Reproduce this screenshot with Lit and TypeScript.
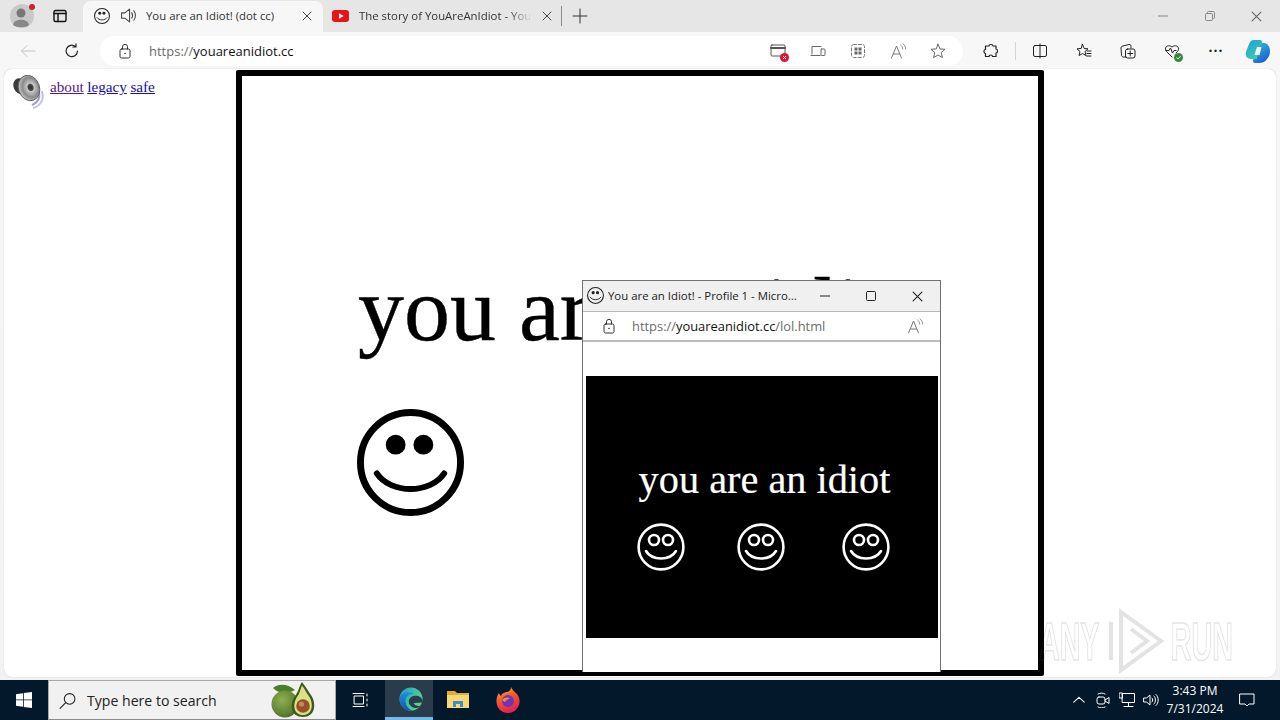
import { LitElement, html, svg, css } from "lit";
import { customElement } from "lit/decorators.js";

/* =========================
   ICONS
========================= */
const stroke = (body: unknown, size = 16, view = 16, color = "#333", width = 1) => html`
  <svg width="${size}" height="${size}" viewBox="0 0 ${view} ${view}" fill="none"
    stroke="${color}" stroke-width="${width}" stroke-linecap="round" stroke-linejoin="round">${body}</svg>
`;

const solidSmiley = (size: number, color = "#000") => html`
  <svg width="${size}" height="${size}" viewBox="0 0 108 108" fill="none" stroke="${color}">
    <circle cx="54" cy="54" r="50.5" stroke-width="7"/>
    <circle cx="39" cy="36" r="10" fill="${color}" stroke="none"/>
    <circle cx="67" cy="36" r="10" fill="${color}" stroke="none"/>
    <path d="M20 65 C34 86 74 86 88 65" stroke-width="6" stroke-linecap="round"/>
  </svg>
`;

const ringSmiley = html`
  <svg width="48" height="48" viewBox="0 0 48 48" fill="none" stroke="#fff" stroke-width="2.6">
    <circle cx="24" cy="24" r="22.4"/>
    <circle cx="17" cy="17" r="5"/>
    <circle cx="31" cy="17" r="5"/>
    <path d="M9 28 C15 38 33 38 39 28" stroke-linecap="round"/>
  </svg>
`;

const lock = stroke(svg`
  <rect x="3" y="6" width="10" height="9" rx="1.5"/>
  <path d="M5.5 6 V3.8 a2.5 2.5 0 0 1 5 0 V6"/>
  <circle cx="8" cy="10.5" r=".8" fill="#333" stroke="none"/>
`);

const readAloud = stroke(svg`
  <path d="M1.5 15 L6.5 3 L11.5 15 M3.3 11 H9.7"/>
  <path d="M10.5 2 C12 3 12.6 4.4 12.7 6 M13 .8 C15 2.2 15.6 4 15.6 6" stroke-width=".8"/>
`, 16, 16, "#777");

const speakerOutline = stroke(svg`
  <path d="M1.5 5.5 H4.5 L9 2 V14 L4.5 10.5 H1.5 Z"/>
  <path d="M11 5.5 C12 7 12 9 11 10.5 M13 3.5 C15 6 15 10 13 12.5"/>
`, 17, 16, "#444");

const closeX = (size = 10, color = "#444") => stroke(svg`<path d="M1 1 L9 9 M9 1 L1 9"/>`, size, 10, color, 1);

const avocado = html`
  <svg width="48" height="38" viewBox="0 0 48 38">
    <defs>
      <radialGradient id="lime" cx=".4" cy=".35" r=".75">
        <stop offset="0" stop-color="#8fae52"/>
        <stop offset=".7" stop-color="#5f8232"/>
        <stop offset="1" stop-color="#3f6020"/>
      </radialGradient>
    </defs>
    <path d="M3 7 C9 2 18 3 25 9 C18 13 9 13 3 7 Z" fill="#4d7c2a"/>
    <circle cx="15" cy="23" r="13.5" fill="url(#lime)"/>
    <path d="M32 1 C35 5 37 8 41 14 C47 23 45 36 33 36 C21 36 19 24 25 15 C29 10 29 5 32 1 Z" fill="#3f5a1c"/>
    <path d="M32 4.5 C35 8.5 36 11 39.5 16 C44 24 42 34 33 34 C24 34 22 24 27 16 C30 12 30 9 32 4.5 Z" fill="#dce086"/>
    <circle cx="33" cy="25" r="6.8" fill="#96512a"/>
    <circle cx="31.5" cy="23" r="2.6" fill="#c48a58"/>
  </svg>
`;

/* =========================
   APP
========================= */
@customElement("app-root")
class AppRoot extends LitElement {
  static styles = css`
    :host {
      display: block;
      width: 1280px;
      height: 720px;
      overflow: hidden;
      position: relative;
      font-family: "Open Sans", "Noto Sans", sans-serif;
      background: #f7f7f7;
    }
    .shell {
      height: 720px;
      display: flex;
      flex-direction: column;
    }
    svg {
      display: block;
      flex: none;
    }
    .slot {
      display: flex;
      align-items: center;
      justify-content: center;
      flex: none;
    }

    /* tab strip */
    .tabstrip {
      height: 32px;
      flex: none;
      display: flex;
      align-items: flex-end;
      background: #e6e6e6;
    }
    .tabstrip > .slot {
      height: 32px;
    }
    .s44 { width: 44px; }
    .s32 { width: 32px; }
    .s40 { width: 40px; }
    .avatar { width: 24px; height: 24px; position: relative; }
    .dot {
      position: absolute;
      right: -1px;
      top: 0;
      width: 6px;
      height: 6px;
      border-radius: 50%;
      background: #d0202c;
    }
    .tab {
      height: 31px;
      display: flex;
      align-items: center;
      font-size: 11.4px;
      color: #333;
      white-space: nowrap;
      box-sizing: border-box;
      padding-bottom: 2px;
    }
    .tab.active {
      width: 240px;
      margin-left: 7px;
      padding-left: 11px;
      padding-right: 11px;
      background: #f7f7f7;
      border-radius: 8px 8px 0 0;
    }
    .tab.active .speaker { margin-left: 10px; }
    .tab.active .title { margin-left: 9px; width: 146px; overflow: hidden; }
    .tab.second {
      width: 238px;
      padding-left: 9px;
      padding-right: 9px;
    }
    .tab.second .title {
      margin-left: 10px;
      width: 173px;
      overflow: hidden;
      -webkit-mask-image: linear-gradient(90deg, #000 86%, transparent);
      mask-image: linear-gradient(90deg, #000 86%, transparent);
    }
    .tab-close { margin-left: auto; }
    .tab-divider {
      width: 1px;
      height: 20px;
      background: #8a8a8a;
      align-self: center;
    }
    .plus { width: 36px; }
    .window-controls {
      margin-left: auto;
      display: flex;
      width: 140px;
    }
    .window-controls .slot { width: 46.5px; height: 32px; }

    /* toolbar */
    .toolbar {
      flex: none;
      display: flex;
      align-items: center;
      background: #f7f7f7;
      padding-top: 1px;
      box-sizing: border-box;
      height: 37px;
    }
    .nav { width: 44px; height: 30px; }
    .nav.back { width: 56px; }
    .nav.reload { width: 32px; margin-right: 12px; }
    .address {
      width: 863px;
      height: 30px;
      background: #fff;
      border-radius: 15px;
      display: flex;
      align-items: center;
      padding: 0 5px 0 17px;
      box-sizing: border-box;
      flex: none;
    }
    .url {
      margin-left: 16px;
      font-size: 13px;
      color: #6b6b6b;
      white-space: nowrap;
    }
    .url b { font-weight: 400; color: #111; }
    .address-icons {
      margin-left: auto;
      display: flex;
    }
    .badge-wrap { position: relative; width: 16px; height: 16px; }
    .badge {
      position: absolute;
      right: -3px;
      bottom: -3px;
    }
    .toolbar-icons {
      margin-left: 6px;
      display: flex;
      align-items: center;
    }
    .tool-divider {
      width: 1px;
      height: 18px;
      background: #d4d4d4;
      margin: 0 2px;
    }
    .more {
      font-size: 14px;
      letter-spacing: 1px;
      font-weight: 700;
      color: #222;
      line-height: 1;
    }

    /* page */
    .page-wrap {
      flex: 1;
      min-height: 0;
      padding: 0 4px 3px;
      background: linear-gradient(#f7f7f7, #f2f2f2);
    }
    .page {
      height: 100%;
      background: #fff;
      border-radius: 8px;
      display: grid;
      grid-template-columns: 232px 808px 1fr;
      box-shadow: 0 0 1px rgba(0, 0, 0, 0.3);
    }
    .links {
      display: flex;
      align-items: flex-start;
      padding: 6px 0 0 8px;
      font: 15.2px "Liberation Serif", serif;
    }
    .links a { color: #1a0dab; margin-right: 3.5px; line-height: 24px; }
    .links a.visited { color: #551a8b; }
    .links svg { margin-right: 4px; }
    .frame {
      margin-top: 1px;
      height: 606px;
      box-sizing: border-box;
      border: 6px solid #000;
      border-radius: 2px;
      overflow: hidden;
      display: flex;
      flex-direction: column;
      align-items: flex-start;
      padding-left: 115px;
      background: #fff;
    }
    .big-text {
      margin: 182px 0 0 1px;
      font: 92px/102px "Liberation Serif", serif;
      -webkit-text-stroke: 0.4px #000;
      color: #000;
      white-space: nowrap;
    }
    .big-faces {
      margin-top: 49px;
      display: flex;
    }

    /* taskbar */
    .taskbar {
      height: 40px;
      flex: none;
      display: flex;
      background: #03182b;
      color: #fff;
    }
    .taskbar .slot { height: 40px; }
    .start { width: 48px; }
    .search {
      width: 288px;
      height: 40px;
      box-sizing: border-box;
      background: #f1f1f1;
      border: 1px solid #a8a8a8;
      border-bottom-color: #8a8a8a;
      display: flex;
      align-items: center;
      padding-left: 10px;
      color: #222;
      font-size: 14.1px;
    }
    .search span { margin-left: 11px; }
    .search .fruit { margin-left: auto; margin-right: 17px; }
    .taskview { width: 49px; margin-left: -1px; margin-right: 1px; }
    .edge {
      width: 48px;
      box-sizing: border-box;
      background: #2a3c4c;
      border-bottom: 3px solid #76b9ed;
      padding-left: 3px;
    }
    .pin { width: 50px; }
    .tray {
      margin-left: auto;
      display: flex;
      align-items: center;
      padding-right: 11px;
    }
    .tray .slot { width: 24px; }
    .clock {
      width: 60px;
      text-align: center;
      font-size: 12px;
      line-height: 18px;
      margin-left: 2px;
      white-space: nowrap;
    }
    .tray .notify { width: 44px; }

    /* popup window, sits over the page */
    .popup {
      position: absolute;
      left: 582px;
      top: 280px;
      width: 359px;
      height: 392px;
      box-sizing: border-box;
      border: 1px solid #707070;
      border-bottom: none;
      background: #fff;
      display: flex;
      flex-direction: column;
    }
    .popup-title {
      height: 30px;
      flex: none;
      background: #f0f0f0;
      display: flex;
      align-items: center;
      padding-left: 4px;
      font-size: 11.4px;
      color: #222;
      white-space: nowrap;
      border-bottom: 1px solid #b8b8b8;
    }
    .popup-title .face svg { margin-bottom: 2px; }
    .popup-title span { margin: 0 0 2px 4px; width: 199px; overflow: hidden; }
    .popup-title .slot { width: 46px; height: 30px; }
    .popup-url {
      height: 30px;
      flex: none;
      box-sizing: border-box;
      display: flex;
      align-items: center;
      padding: 0 17px 0 18px;
      border-bottom: 2px solid #bdbdbd;
    }
    .popup-url .url { margin-left: 15px; font-size: 12.9px; }
    .popup-url .read { margin-left: auto; }
    .black {
      margin: 34px 2px 0 3px;
      height: 262px;
      background: #000;
      color: #fff;
      display: flex;
      flex-direction: column;
      align-items: center;
    }
    .black-text {
      margin-top: 81px;
      font: 40.3px/46px "Liberation Serif", serif;
      -webkit-text-stroke: 0.2px #fff;
      white-space: nowrap;
      padding-left: 5px;
    }
    .black-faces {
      margin-top: 20px;
      display: flex;
      gap: 52px;
      padding-left: 2px;
    }
    .black-faces svg:last-child { margin-left: 5px; }

    /* watermark */
    .mark {
      position: absolute;
      left: 1039px;
      top: 608px;
      width: 194px;
      height: 66px;
      display: flex;
      align-items: center;
      justify-content: space-between;
      font: 700 53px/1 "Liberation Sans", sans-serif;
      color: transparent;
      -webkit-text-stroke: 1.5px rgba(90, 90, 90, 0.17);
    }
    .mark span {
      display: block;
      flex: none;
      transform: scaleX(0.54);
    }
    .mark .any { transform-origin: left; margin-right: -52px; }
    .mark .run { transform-origin: right; margin-left: -53px; }
  `;

  render() {
    return html`
      <div class="shell">
        ${this.renderTabstrip()}
        ${this.renderToolbar()}
        <div class="page-wrap">
          <div class="page">
            <div class="links">
              <svg width="34" height="34" viewBox="0 0 34 34">
                <defs>
                  <radialGradient id="cone" cx=".58" cy=".5" r=".55">
                    <stop offset="0" stop-color="#2e2e2e"/>
                    <stop offset=".22" stop-color="#4a4a4a"/>
                    <stop offset=".3" stop-color="#c8c8c8"/>
                    <stop offset=".7" stop-color="#8a8a8a"/>
                    <stop offset="1" stop-color="#c2c2c2"/>
                  </radialGradient>
                </defs>
                <path d="M26 15 C29 21 27 27 20 30" stroke="#9f9cc9" stroke-width="2" fill="none"/>
                <path d="M29.5 16 C33 23 29 31 21 33" stroke="#c3c1e2" stroke-width="2" fill="none"/>
                <ellipse cx="8" cy="11" rx="6.5" ry="8" transform="rotate(-20 8 11)" fill="#3a3a3a"/>
                <ellipse cx="17" cy="13" rx="10.5" ry="13" transform="rotate(-20 17 13)" fill="url(#cone)" stroke="#555" stroke-width=".8"/>
              </svg>
              <a class="visited" href="#">about</a>
              <a href="#">legacy</a>
              <a href="#">safe</a>
            </div>
            <div class="frame">
              <div class="big-text">you are an idiot</div>
              <div class="big-faces">${solidSmiley(107)}</div>
            </div>
          </div>
        </div>
        ${this.renderTaskbar()}
      </div>
      ${this.renderPopup()}
      <div class="mark">
        <span class="any">ANY</span>
        <svg width="60" height="66" viewBox="0 0 60 66" fill="none" stroke="rgba(90,90,90,.17)" stroke-width="4">
          <path d="M6 14 V52 M16 4 L56 33 L16 62 Z M26 21 L42 33 L26 45"/>
        </svg>
        <span class="run">RUN</span>
      </div>
    `;
  }

  private renderTabstrip() {
    return html`
      <div class="tabstrip">
        <div class="slot s44">
          <div class="avatar">
            <svg width="24" height="24" viewBox="0 0 24 24">
              <circle cx="12" cy="12" r="12" fill="#c9c9c9"/>
              <circle cx="11" cy="9" r="4.5" fill="#777"/>
              <path d="M3 21 C4 14 18 14 19 21 C16 24 7 24 3 21 Z" fill="#888"/>
            </svg>
            <span class="dot"></span>
          </div>
        </div>
        <div class="slot s32">
          ${stroke(svg`<rect x="2" y="2.5" width="12" height="11" rx="1.5" stroke-width="1.4"/><path d="M2 5.5 H14 M6 5.5 V13.5" stroke-width="1.4"/>`, 16, 16, "#111")}
        </div>
        <div class="tab active">
          ${solidSmiley(16, "#222")}
          <span class="speaker">${speakerOutline}</span>
          <span class="title">You are an Idiot! (dot cc)</span>
          <span class="tab-close">${closeX()}</span>
        </div>
        <div class="tab second">
          <svg width="17" height="12" viewBox="0 0 17 12">
            <rect width="17" height="12" rx="3" fill="#e8141c"/>
            <path d="M7 3.2 L11.5 6 L7 8.8 Z" fill="#fff"/>
          </svg>
          <span class="title">The story of YouAreAnIdiot - YouTube</span>
          <span class="tab-close">${closeX()}</span>
        </div>
        <div class="tab-divider"></div>
        <div class="slot plus">
          ${stroke(svg`<path d="M8 1 V15 M1 8 H15"/>`, 16, 16, "#333")}
        </div>
        <div class="window-controls">
          <div class="slot">${stroke(svg`<path d="M0 5 H10"/>`, 10, 10, "#888")}</div>
          <div class="slot">${stroke(svg`<rect x=".5" y="2.5" width="7" height="7" rx="1"/><path d="M2.5 2.5 V1.5 a1 1 0 0 1 1 -1 H8.5 a1 1 0 0 1 1 1 V6.5 a1 1 0 0 1 -1 1 H7.5"/>`, 10, 10, "#888")}</div>
          <div class="slot">${closeX(11, "#666")}</div>
        </div>
      </div>
    `;
  }

  private renderToolbar() {
    return html`
      <div class="toolbar">
        <div class="slot nav back">
          ${stroke(svg`<path d="M15 8 H1.5 M7 2.5 L1.5 8 L7 13.5"/>`, 16, 16, "#c4c4c4")}
        </div>
        <div class="slot nav reload">
          ${stroke(svg`<path d="M13.5 8 a5.7 5.7 0 1 1 -2 -4.4 M12 .8 V4 H8.8" />`, 16, 16, "#222", 1.2)}
        </div>
        <div class="address">
          ${lock}
          <span class="url">https://<b>youareanidiot.cc</b></span>
          <div class="address-icons">
            <div class="slot s40">
              <div class="badge-wrap">
                ${stroke(svg`<rect x="1" y="2" width="14" height="11" rx="1"/><path d="M1 5 H15" stroke-width="2"/>`, 16, 16, "#555")}
                <svg class="badge" width="9" height="9" viewBox="0 0 9 9">
                  <circle cx="4.5" cy="4.5" r="4.5" fill="#e3152b"/>
                  <path d="M3 3 L6 6 M6 3 L3 6" stroke="#fff" stroke-width="1"/>
                </svg>
              </div>
            </div>
            <div class="slot s40">
              ${stroke(svg`<path d="M2 11 V3.5 H11 M1 12.5 H10"/><rect x="11" y="6" width="4" height="6.5" rx=".7"/>`, 16, 16, "#666")}
            </div>
            <div class="slot s40">
              ${stroke(svg`
                <rect x="1.5" y="1.5" width="13" height="13" rx="2" stroke-dasharray="3 2"/>
                <rect x="4.5" y="4.5" width="3" height="3" fill="#666" stroke="none"/>
                <rect x="8.5" y="4.5" width="3" height="3" fill="#666" stroke="none"/>
                <rect x="4.5" y="8.5" width="3" height="3" fill="#666" stroke="none"/>
                <rect x="8.5" y="8.5" width="3" height="3" fill="#666" stroke="none"/>
              `, 16, 16, "#777")}
            </div>
            <div class="slot s40">${readAloud}</div>
            <div class="slot s40">
              ${stroke(svg`<path d="M8 1.2 L10 5.9 L15 6.3 L11.2 9.6 L12.4 14.6 L8 12 L3.6 14.6 L4.8 9.6 L1 6.3 L6 5.9 Z"/>`, 16, 16, "#666")}
            </div>
          </div>
        </div>
        <div class="toolbar-icons">
          <div class="slot s44">
            ${stroke(svg`<path d="M6 3 C6 1 10 1 10 3 H13 V6 C15 6 15 10 13 10 V13.5 H9.5 C9.5 11.5 6 11.5 6 13.5 H2.5 V10.5 C.5 10.5 .5 6.5 2.5 6.5 V3 Z" stroke-width="1.2"/>`, 16, 16, "#222")}
          </div>
          <div class="tool-divider"></div>
          <div class="slot s44">
            ${stroke(svg`<rect x="1.5" y="2.5" width="13" height="11" rx="1.5"/><path d="M8 1 V15"/>`, 16, 16, "#222")}
          </div>
          <div class="slot s44">
            ${stroke(svg`<path d="M6.5 1.5 L8.2 5.5 L12 5.8 L9 8.5 L10 12.5 L6.5 10.5 L3 12.5 L4 8.5 L1 5.8 L4.8 5.5 Z M11 8 H15 M11 10.5 H15 M10.5 13 H15"/>`, 16, 16, "#222")}
          </div>
          <div class="slot s44">
            ${stroke(svg`<path d="M6 14 H3.5 C2 14 1.5 13 1.5 12 L1 5 C1 3.5 2 3 3 3 L9 1.5 C10.5 1.3 11 2 11 3.5 V5"/><rect x="5.5" y="6" width="9.5" height="9" rx="2"/><path d="M10.2 8 V13 M7.8 10.5 H12.7"/>`, 16, 16, "#222")}
          </div>
          <div class="slot s44">
            <div class="badge-wrap">
              ${stroke(svg`<path d="M8 14 L2.5 8.5 C-.5 5 3.5 .5 8 4 C12.5 .5 16.5 5 13.5 8.5 L12 10 M2 7.5 H5 L6.5 5 L8.5 10 L10 7.5 H12"/>`, 16, 16, "#222")}
              <svg class="badge" width="9" height="9" viewBox="0 0 9 9">
                <circle cx="4.5" cy="4.5" r="4.5" fill="#2e8b3d"/>
                <path d="M2.5 4.6 L4 6 L6.6 3.2" stroke="#fff" stroke-width="1" fill="none"/>
              </svg>
            </div>
          </div>
          <div class="slot s44"><span class="more">···</span></div>
          <div class="slot s40">
            <svg width="26" height="26" viewBox="0 0 26 26">
              <defs>
                <linearGradient id="cpa" x1="0" y1="0" x2=".6" y2="1">
                  <stop offset="0" stop-color="#1f9ce8"/>
                  <stop offset="1" stop-color="#36cfa8"/>
                </linearGradient>
                <linearGradient id="cpb" x1="0" y1="0" x2=".6" y2="1">
                  <stop offset="0" stop-color="#36c5d8"/>
                  <stop offset="1" stop-color="#1b5fd0"/>
                </linearGradient>
              </defs>
              <path d="M9 2 H15 C17 2 17.5 4 16.5 6 L11.5 21 H6 C2 21 0 18 1 14 L4 6 C5 3.5 6.5 2 9 2 Z" fill="url(#cpa)"/>
              <path d="M16 5 H20 C23 6 25 9 25 13 C25 16 24 19 22 21 C20 24 17 25 14 25 H10 C8 25 7.5 23 8.5 21 H11.5 Z" fill="url(#cpb)"/>
              <path d="M12 9 H16.5 L14.5 17 H9.5 Z" fill="#f7f7f7"/>
            </svg>
          </div>
        </div>
      </div>
    `;
  }

  private renderTaskbar() {
    return html`
      <div class="taskbar">
        <div class="slot start">
          <svg width="16" height="16" viewBox="0 0 16 16" fill="#fff">
            <path d="M0 2.2 L7 1.2 V7.5 H0 Z M7.8 1.1 L16 0 V7.5 H7.8 Z M0 8.3 H7 V14.8 L0 13.8 Z M7.8 8.3 H16 V16 L7.8 14.9 Z"/>
          </svg>
        </div>
        <div class="search">
          ${stroke(svg`<circle cx="10" cy="6.5" r="5"/><path d="M6.3 10 L1 15.5"/>`, 17, 16, "#222")}
          <span>Type here to search</span>
          <div class="fruit">${avocado}</div>
        </div>
        <div class="slot taskview">
          ${stroke(svg`<rect x="2.5" y="4" width="9" height="8"/><path d="M1 1.5 H12 M1 14.5 H12 M15 2 V4 M15 7 V9 M15 12 V14"/>`, 16, 16, "#fff")}
        </div>
        <div class="slot edge">
          <svg width="24" height="24" viewBox="0 0 24 24">
            <defs>
              <linearGradient id="eg" x1="0" y1="0" x2="1" y2=".6">
                <stop offset="0" stop-color="#1f9fc8"/>
                <stop offset="1" stop-color="#58d68c"/>
              </linearGradient>
              <linearGradient id="eb" x1="0" y1="0" x2="0" y2="1">
                <stop offset="0" stop-color="#1f8fe0"/>
                <stop offset="1" stop-color="#0c59a8"/>
              </linearGradient>
            </defs>
            <circle cx="12" cy="12" r="11.5" fill="url(#eg)"/>
            <path d="M23.5 14 C23 9.5 18.5 8 14.5 9 C10 10 8.5 15 11 18 C13.5 22 19 22 22 18.5 C20 19.5 15.5 19 14.5 16 L23.5 15.5 Z" fill="#2a3c4c"/>
            <path d="M.5 12 C1 6 9 3 15 7 C9.5 6.5 6 10 6.5 15 C7 19 9.5 22 13 23.5 C6 24 .5 19 .5 12 Z" fill="url(#eb)"/>
          </svg>
        </div>
        <div class="slot pin">
          <svg width="22" height="20" viewBox="0 0 22 20">
            <path d="M0 1 H8 L10 3 H22 V18 H0 Z" fill="#e4ad2c"/>
            <rect y="5" width="22" height="13" fill="#f8d775"/>
            <path d="M6 17 V11 H16 V17 H13 V14 H9 V17 Z" fill="#3c8ed0"/>
          </svg>
        </div>
        <div class="slot pin">
          <svg width="24" height="26" viewBox="0 0 24 26">
            <defs>
              <linearGradient id="ff" x1="0" y1="0" x2=".4" y2="1">
                <stop offset="0" stop-color="#ffc42e"/>
                <stop offset=".5" stop-color="#f5582d"/>
                <stop offset="1" stop-color="#e3254f"/>
              </linearGradient>
            </defs>
            <path d="M15 0 C16 3 19 5 21 7 C24 11 24 15 23 18 C21 23 17 26 12 26 C6 26 1 22 .5 15 C.3 11 1.5 8 3 6 C3.5 7.5 4 8.5 5 9 C6 6 9 5 11 5 C13 4.5 15 3 15 0 Z" fill="url(#ff)"/>
            <circle cx="12" cy="14" r="6" fill="#6f35b5"/>
            <path d="M6 13 C8 10 12 10 14 11 C12 12.5 10 13 9 15 C8 14.5 7 14 6 13 Z" fill="#f5882d"/>
          </svg>
        </div>
        <div class="tray">
          <div class="slot">
            ${stroke(svg`<path d="M2 10.5 L8 5 L14 10.5"/>`, 14, 16, "#fff", 1.2)}
          </div>
          <div class="slot">
            ${stroke(svg`<rect x="2" y="5" width="8" height="7" rx="2"/><path d="M10 8 L14 5.5 V11.5 L10 9 M3 2 C5 .8 8 .8 10 2 M3 15 C5 16.2 8 16.2 10 15"/>`, 16, 16, "#fff")}
          </div>
          <div class="slot">
            ${stroke(svg`<rect x="3.5" y="1.5" width="12" height="9"/><rect x=".5" y="1" width="3" height="5"/><path d="M9.5 10.5 V14 M5 14.5 H14"/>`, 16, 16, "#fff")}
          </div>
          <div class="slot">
            ${stroke(svg`<path d="M1 6 H3.5 L7 3 V13 L3.5 10 H1 Z M9 6 C10 7 10 9 9 10 M11 4 C13 6 13 10 11 12 M13 2.5 C16 5 16 11 13 13.5"/>`, 16, 16, "#fff")}
          </div>
          <div class="clock">3:43 PM<br />7/31/2024</div>
          <div class="slot notify">
            ${stroke(svg`<path d="M1 2 H15 V12 H10 L8 14 L6 12 H1 Z"/>`, 16, 16, "#fff")}
          </div>
        </div>
      </div>
    `;
  }

  private renderPopup() {
    return html`
      <div class="popup">
        <div class="popup-title">
          <div class="face">${solidSmiley(17, "#222")}</div>
          <span>You are an Idiot! - Profile 1 - Micro...</span>
          <div class="slot">${stroke(svg`<path d="M0 5 H10"/>`, 10, 10, "#222")}</div>
          <div class="slot">${stroke(svg`<rect x=".5" y=".5" width="9" height="9" rx="1"/>`, 10, 10, "#222")}</div>
          <div class="slot">${closeX(11, "#222")}</div>
        </div>
        <div class="popup-url">
          ${lock}
          <span class="url">https://<b>youareanidiot.cc</b>/lol.html</span>
          <span class="read">${readAloud}</span>
        </div>
        <div class="black">
          <div class="black-text">you are an idiot</div>
          <div class="black-faces">${ringSmiley}${ringSmiley}${ringSmiley}</div>
        </div>
      </div>
    `;
  }
}
